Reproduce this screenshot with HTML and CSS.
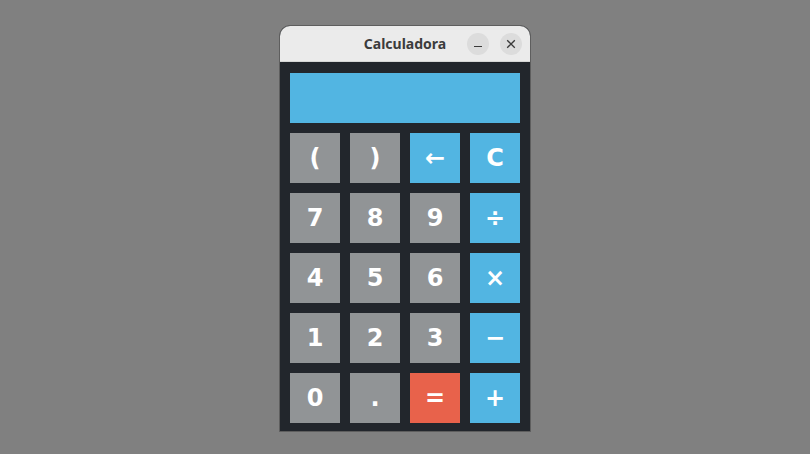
FILE: index.html
```html
<!DOCTYPE html>
<html lang="pt">
<head>
<meta charset="utf-8">
<title>Calculadora</title>
<link rel="stylesheet" href="styles.css">
</head>
<body>
<div class="desktop">
  <div class="window">
    <div class="titlebar">
      <span class="title">Calculadora</span>
      <div class="controls">
        <button class="ctl" aria-label="Minimizar">
          <svg width="10" height="10" viewBox="0 0 10 10"><path d="M1 7.5H9" stroke="#3a3a3a" stroke-width="1.2"/></svg>
        </button>
        <button class="ctl" aria-label="Fechar">
          <svg width="10" height="10" viewBox="0 0 10 10"><path d="M1.2 1.2L8.8 8.8M8.8 1.2L1.2 8.8" stroke="#3a3a3a" stroke-width="1.3"/></svg>
        </button>
      </div>
    </div>
    <div class="body">
      <div class="display"></div>
      <div class="keys">
        <button class="key gray">(</button>
        <button class="key gray">)</button>
        <button class="key blue">←</button>
        <button class="key blue">C</button>
        <button class="key gray">7</button>
        <button class="key gray">8</button>
        <button class="key gray">9</button>
        <button class="key blue">÷</button>
        <button class="key gray">4</button>
        <button class="key gray">5</button>
        <button class="key gray">6</button>
        <button class="key blue">×</button>
        <button class="key gray">1</button>
        <button class="key gray">2</button>
        <button class="key gray">3</button>
        <button class="key blue">−</button>
        <button class="key gray">0</button>
        <button class="key gray">.</button>
        <button class="key red">=</button>
        <button class="key blue">+</button>
      </div>
    </div>
  </div>
</div>
</body>
</html>
```
FILE: styles.css
```css
html, body {
  margin: 0;
  padding: 0;
  background: #808080;
}
.desktop {
  width: 810px;
  height: 454px;
  display: flex;
  justify-content: center;
  align-items: flex-start;
  padding-top: 25px;
  box-sizing: border-box;
}
.window {
  width: 252px;
  border: 1px solid #5e5e5e;
  border-radius: 11px 11px 0 0;
  overflow: hidden;
  box-sizing: border-box;
  background: #22262c;
}
.titlebar {
  height: 36px;
  background: #ebebeb;
  position: relative;
  display: flex;
  align-items: center;
  justify-content: center;
  border-bottom: 1px solid #d6d6d6;
  box-sizing: border-box;
}
.title {
  font-family: "Noto Sans", "DejaVu Sans", sans-serif;
  font-weight: 700;
  font-size: 14px;
  color: #3c3c3c;
}
.controls {
  position: absolute;
  right: 8px;
  top: 7px;
  display: flex;
  gap: 11px;
}
.ctl {
  width: 22px;
  height: 22px;
  border-radius: 50%;
  border: none;
  background: #dcdcdc;
  padding: 0;
  display: flex;
  align-items: center;
  justify-content: center;
}
.body {
  padding: 11px 10px 8px 10px;
  display: flex;
  flex-direction: column;
  gap: 10px;
}
.display {
  height: 50px;
  background: #52b5e2;
}
.keys {
  display: grid;
  grid-template-columns: repeat(4, 50px);
  grid-auto-rows: 50px;
  gap: 10px;
}
.key {
  border: none;
  padding: 0;
  font-family: "DejaVu Sans", sans-serif;
  font-weight: 700;
  font-size: 24px;
  color: #ffffff;
  display: flex;
  align-items: center;
  justify-content: center;
}
.gray { background: #919496; }
.blue { background: #52b5e2; }
.red { background: #e8624b; }
```
